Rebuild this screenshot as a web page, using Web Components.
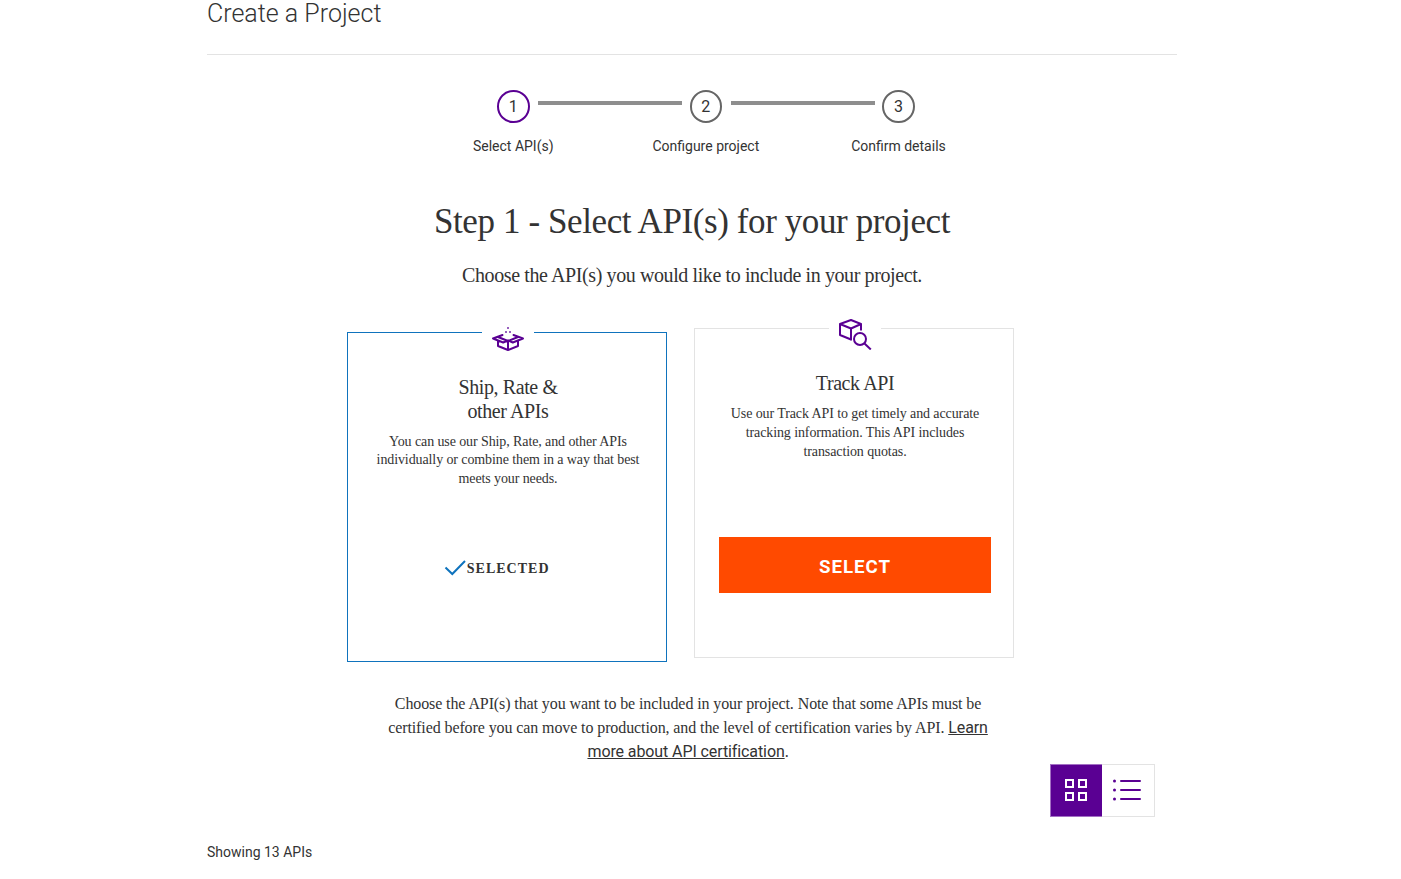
<!DOCTYPE html>
<html lang="en">
<head>
<meta charset="utf-8">
<title>Create a Project</title>
<style>
body{margin:0;background:#fff;color:#333;font-family:Roboto,sans-serif;overflow:hidden}
</style>
</head>
<body>
<project-page></project-page>
<script>
function define(name, markup) {
  const t = document.createElement('template');
  t.innerHTML = markup;
  customElements.define(name, class extends HTMLElement {
    constructor() {
      super();
      this.attachShadow({mode: 'open'}).append(t.content.cloneNode(true));
    }
  });
}

define('page-header', `
<style>
:host{display:block;height:54px;border-bottom:1px solid #e3e3e3}
h1{margin:0;font:300 25px/28px Roboto,sans-serif;color:#333}
</style>
<h1><slot></slot></h1>`);

define('step-item', `
<style>
:host{display:flex;flex-direction:column;align-items:center;width:97.5px;flex:none}
.dot{box-sizing:border-box;width:32.6px;height:33px;border:2px solid var(--ring,#666);border-radius:50%;font-size:16px;line-height:29px;text-align:center}
.label{margin-top:14px;font-size:14px;line-height:18px;white-space:nowrap}
</style>
<div class="dot"><slot name="number"></slot></div>
<div class="label"><slot></slot></div>`);

define('step-line', `
<style>
:host{display:block;flex:none;width:144px;height:4px;margin:11px -25.05px 0 -23.85px;background:#8e8e8e}
</style>`);

define('progress-steps', `
<style>
:host{display:flex;align-items:flex-start;padding:35px 0 0 257.5px}
</style>
<step-item style="--ring:#5a0093"><span slot="number">1</span>Select API(s)</step-item>
<step-line></step-line>
<step-item><span slot="number">2</span>Configure project</step-item>
<step-line></step-line>
<step-item><span slot="number">3</span>Confirm details</step-item>`);

define('box-icon', `
<style>:host{display:block}svg{display:block}</style>
<svg width="34" height="26" viewBox="0 0 34 26" fill="none" stroke="#5a0093" stroke-width="2" stroke-linejoin="round" stroke-linecap="round">
<path d="M17 15 7 11M17 15l10-4M11.500 9 2 12.500l10.200 4L17 14.500l4.800 2 10.200-4L22.500 9M7 15.500v4.500L17 24l10-4v-4.500M17 15v9"/>
<path d="M17 1v2M15 5v2M19 5v2" stroke="#9860be" stroke-linecap="butt"/></svg>`);

define('track-icon', `
<style>:host{display:block}svg{display:block}</style>
<svg width="34" height="32" viewBox="0 0 34 32" fill="none" stroke="#5a0093" stroke-width="2" stroke-linejoin="round">
<path d="M13 21.500 2 17V6L13 2l10 4v6.500M2 6l11 4.500L23 6M13 10.500V22.500"/>
<circle cx="22" cy="21" r="6"/><path d="m26.500 25.500 6.300 6"/></svg>`);

define('api-card', `
<style>
:host{box-sizing:border-box;display:block;width:320px;height:330px;border:1px solid var(--line,#e3e3e3);padding:0 22px 0 24px;font-family:"Liberation Serif",serif;text-align:center}
.icon{width:52px;height:34px;margin:-11px auto 0;background:#fff;display:flex;justify-content:center;position:relative}
h3{margin:19px 0 0;font-weight:400;font-size:20px;line-height:24px;letter-spacing:-.4px}
p{margin:var(--gap,9.6px) 0 0;font-size:14px;line-height:var(--leading,18.67px);letter-spacing:-.1px;white-space:nowrap}
</style>
<div class="icon"><slot name="icon"></slot></div>
<h3><slot name="title"></slot></h3>
<p><slot></slot></p>
<div class="action"><slot name="action"></slot></div>`);

define('select-button', `
<style>
:host{display:block;margin-top:76px}
button{display:block;box-sizing:border-box;width:272px;height:56px;border:0;margin:0;padding:4px 0 0;background:#ff4a00;color:#fff;font:700 18.700px/24px Roboto,sans-serif;letter-spacing:1px}
</style>
<button><slot></slot></button>`);

define('selected-mark', `
<style>
:host{display:flex;align-items:center;margin:70px 0 0 72px;font-weight:700;font-size:14px;line-height:20px;letter-spacing:1px}
svg{display:block;margin-right:.8px;flex:none;overflow:visible}
</style>
<svg width="22" height="16" viewBox="0 0 22 16" fill="none" stroke="#0f73bd" stroke-width="2"><path d="m1.500 6.500 6.800 6.500L21 0"/></svg>
<span><slot></slot></span>`);

define('view-toggle', `
<style>
:host{display:flex;box-sizing:border-box;width:105px;height:53px;border:1px solid #e3e3e3}
div{box-sizing:border-box;width:52px;height:51px;padding:14px 0 0 11px}
.grid{width:52px;height:53px;margin:-1px 0 0 -1px;padding:14px 0 0 14px;background:#5a0093;border:1px solid #a36fc4;border-right:0}
svg{display:block}
</style>
<div class="grid"><svg width="22" height="22" viewBox="0 0 22 22" fill="none" stroke="#fff" stroke-width="2"><path d="M1 1h7v7H1zM14 1h7v7h-7zM1 14h7v7H1zM14 14h7v7h-7z"/></svg></div>
<div><svg width="28" height="22" viewBox="0 0 28 22" fill="#5a0093"><circle cx="1.500" cy="2" r="1.500"/><circle cx="1.500" cy="11" r="1.500"/><circle cx="1.500" cy="20" r="1.500"/><path d="M8 2h19M8 11h19M8 20h19" stroke="#5a0093" stroke-width="2" stroke-linecap="round"/></svg></div>`);

define('project-page', `
<style>
:host{display:block;width:970px;height:879px;margin-left:207px}
h2,.lead,.note{font-family:"Liberation Serif",serif;font-weight:400;text-align:center;margin:0}
h2{margin-top:47px;font-size:35px;line-height:40px;letter-spacing:-.4px}
.lead{margin-top:21px;font-size:20px;line-height:24px;letter-spacing:-.4px}
.cards{display:flex;gap:27px;align-items:flex-start;padding:41px 0 0 140px}
.first{margin-top:4px}
.note{margin:30px 0 0 171px;width:620px;font-size:16px;line-height:24px;letter-spacing:-.1px}
.note a{font-family:Roboto,sans-serif;color:#333;text-decoration:underline}
.tools{display:flex;justify-content:flex-end;padding-right:22px}
.count{font-size:14px;line-height:18px;margin-top:26px}
</style>
<page-header>Create a Project</page-header>
<progress-steps></progress-steps>
<h2>Step 1 - Select API(s) for your project</h2>
<p class="lead">Choose the API(s) you would like to include in your project.</p>
<div class="cards">
<api-card class="first" style="--line:#0f73bd"><box-icon slot="icon" style="margin-top:4px"></box-icon><span slot="title">Ship, Rate &amp;<br>other APIs</span>You can use our Ship, Rate, and other APIs<br>individually or combine them in a way that best<br>meets your needs.<selected-mark slot="action">SELECTED</selected-mark></api-card>
<api-card style="--leading:19px;--gap:9px"><track-icon slot="icon"></track-icon><span slot="title">Track API</span>Use our Track API to get timely and accurate<br>tracking information. This API includes<br>transaction quotas.<select-button slot="action">SELECT</select-button></api-card>
</div>
<p class="note">Choose the API(s) that you want to be included in your project. Note that some APIs must be<br>certified before you can move to production, and the level of certification varies by API. <a>Learn<br>more about API certification</a>.</p>
<div class="tools"><view-toggle></view-toggle></div>
<div class="count">Showing 13 APIs</div>`);
</script>
</body>
</html>
